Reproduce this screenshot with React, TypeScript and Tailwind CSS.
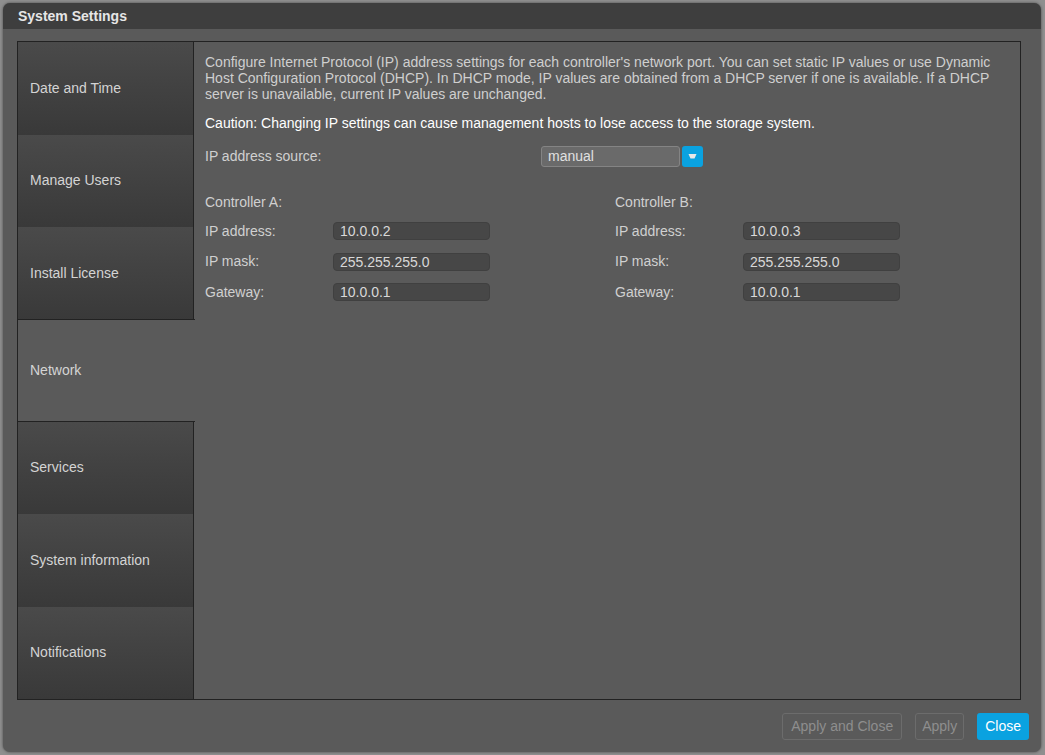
import { useState } from "react";

const tabs = [
  "Date and Time",
  "Manage Users",
  "Install License",
  "Network",
  "Services",
  "System information",
  "Notifications",
];

const font = { fontFamily: '"Liberation Sans", Arial, sans-serif' };

function Field({ label, value }: { label: string; value: string }) {
  return (
    <div className="flex items-center h-[18px] mb-[12.5px]">
      <span className="w-[128px] text-[14px] text-[#d0d0d0]">{label}</span>
      <div className="w-[157px] h-[18px] rounded-[4px] bg-[#474747] border border-[#404040] px-[6px] text-[14px] leading-[16px] text-[#d8d8d8]">
        {value}
      </div>
    </div>
  );
}

function Controller({ name, ip, mask, gw }: { name: string; ip: string; mask: string; gw: string }) {
  return (
    <div className="w-[410px] shrink-0">
      <div className="text-[14px] text-[#d0d0d0] h-[16px] mb-[14px]">{name}</div>
      <Field label="IP address:" value={ip} />
      <Field label="IP mask:" value={mask} />
      <Field label="Gateway:" value={gw} />
    </div>
  );
}

export default function App() {
  const [active, setActive] = useState("Network");

  return (
    <div className="w-[1045px] h-[755px] bg-[#8f8f8f] pl-[3px] pt-[3px]" style={font}>
      <div className="w-[1038px] h-[749px] rounded-[7px] bg-[#5a5a5a] overflow-hidden flex flex-col shadow-[0_0_3px_rgba(0,0,0,0.5)]">
        <div className="h-[26px] bg-[#3e3e3e] flex items-center pl-[15px] shrink-0">
          <span className="text-[14px] font-bold text-[#e6e6e6]">System Settings</span>
        </div>

        <div className="ml-[14px] mr-[20px] mt-[12px] h-[659px] border border-[#222] flex">
          <div className="w-[176px] flex flex-col shrink-0">
            {tabs.map((t) => {
              const sel = t === active;
              return (
                <button
                  key={t}
                  onClick={() => setActive(t)}
                  className={
                    sel
                      ? "h-[103px] -mt-px border-y border-[#222] bg-[#5a5a5a] text-left pl-[12px] text-[14px] text-[#d4d4d4] relative z-10 w-[177px]"
                      : "flex-1 bg-gradient-to-b from-[#4a4a4a] to-[#393939] border-r border-[#222] text-left pl-[12px] text-[14px] text-[#d4d4d4]"
                  }
                >
                  {t}
                </button>
              );
            })}
          </div>

          <div className="flex-1 min-w-0 pl-[11px] pr-[16px] pt-[12px]">
            <p className="text-[14px] leading-[16px] text-[#cfcfcf]">
              Configure Internet Protocol (IP) address settings for each controller's network port. You can set static IP values or use Dynamic Host Configuration Protocol (DHCP). In DHCP mode, IP values are obtained from a DHCP server if one is available. If a DHCP server is unavailable, current IP values are unchanged.
            </p>
            <p className="text-[14px] leading-[16px] text-white mt-[13px]">
              Caution: Changing IP settings can cause management hosts to lose access to the storage system.
            </p>

            <div className="flex items-center mt-[15px] h-[21px]">
              <span className="w-[336px] text-[14px] text-[#d0d0d0]">IP address source:</span>
              <div className="w-[139px] h-[21px] rounded-[3px] bg-[#6a6a6a] border border-[#848484] px-[6px] text-[14px] leading-[19px] text-[#e0e0e0]">
                manual
              </div>
              <div className="ml-[2px] w-[21px] h-[21px] rounded-[3px] bg-[#0aa2e0] flex items-center justify-center">
                <svg width="9" height="7" viewBox="0 0 9 7">
                  <path d="M0.5 1 H8.5 L6.5 5.5 H2.5 Z" fill="#e8e8e8" />
                </svg>
              </div>
            </div>

            <div className="flex mt-[25px]">
              <Controller name="Controller A:" ip="10.0.0.2" mask="255.255.255.0" gw="10.0.0.1" />
              <Controller name="Controller B:" ip="10.0.0.3" mask="255.255.255.0" gw="10.0.0.1" />
            </div>
          </div>
        </div>

        <div className="flex justify-end items-center mt-[13px] pr-[12px] gap-[13px]">
          <button className="h-[27px] px-[8px] rounded-[3px] border border-[#6c6c6c] text-[14px] text-[#8e8e8e]">
            Apply and Close
          </button>
          <button className="h-[27px] px-[6px] rounded-[3px] border border-[#6c6c6c] text-[14px] text-[#8e8e8e]">
            Apply
          </button>
          <button className="h-[27px] px-[8px] rounded-[3px] bg-[#0aa2e0] text-[14px] text-white">
            Close
          </button>
        </div>
      </div>
    </div>
  );
}
